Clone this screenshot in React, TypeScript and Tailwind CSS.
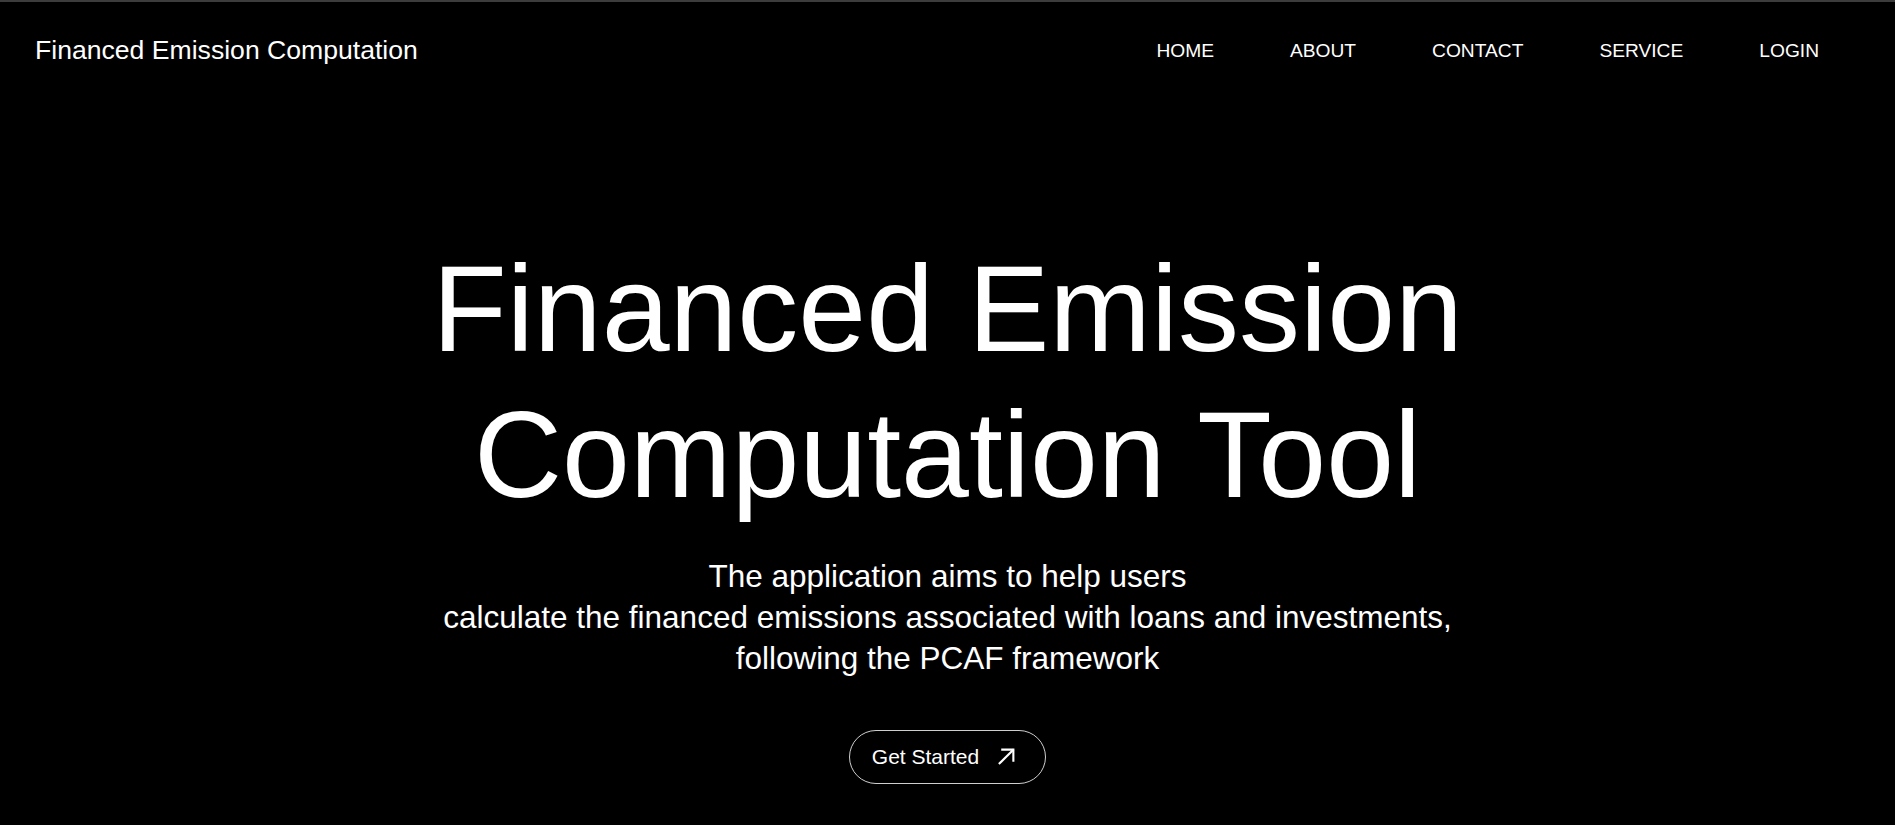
import React from 'react';

const navLinks = ['HOME', 'ABOUT', 'CONTACT', 'SERVICE', 'LOGIN'];

const ArrowIcon: React.FC = () => (
  <svg width="19" height="19" viewBox="0 0 18 18" fill="none" stroke="currentColor" strokeWidth="2" strokeLinecap="square">
    <path d="M2.5 15.5 L15 3" />
    <path d="M5 2.5 H15.5 V13" />
  </svg>
);

const App: React.FC = () => {
  return (
    <div className="min-h-screen bg-black text-white border-t-2 border-[#3c3c3c] font-['Liberation_Sans',Arial,sans-serif]">
      <header className="h-[97px] flex items-center justify-between pl-[35px] pr-[76px]">
        <a href="#" className="text-[26.6px] leading-none">
          Financed Emission Computation
        </a>
        <nav className="pt-[2px]">
          <ul className="flex items-center gap-[76px]">
            {navLinks.map((link) => (
              <li key={link}>
                <a href="#" className="text-[19.2px] leading-none">
                  {link}
                </a>
              </li>
            ))}
          </ul>
        </nav>
      </header>

      <section className="flex flex-col items-center text-center pt-[137px]">
        <h1 className="text-[122px] leading-[1.2]">
          Financed Emission
          <br />
          Computation Tool
        </h1>
        <p className="mt-[27px] text-[31.5px] leading-[41px]">
          The application aims to help users
          <br />
          calculate the financed emissions associated with loans and investments,
          <br />
          following the PCAF framework
        </p>
        <button className="mt-[51px] h-[54px] pl-[22px] pr-[29px] flex items-center gap-[18px] rounded-full border border-[#cfcfcf] text-[21px]">
          <span>Get Started</span>
          <ArrowIcon />
        </button>
      </section>
    </div>
  );
};

export default App;
